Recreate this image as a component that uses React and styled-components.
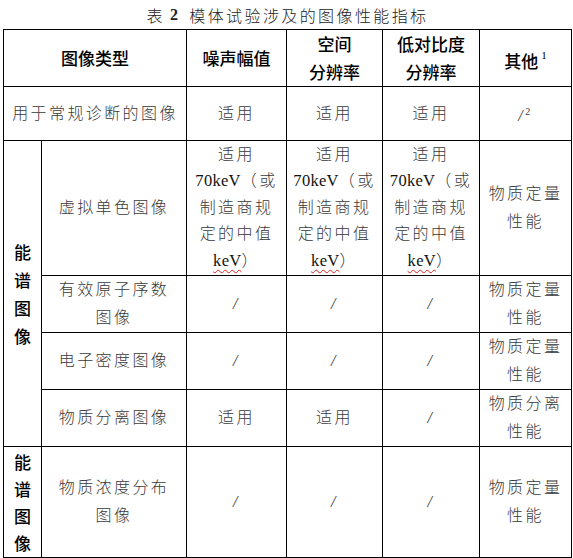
import React from "react";
import styled, { createGlobalStyle } from "styled-components";

const GlobalStyle = createGlobalStyle`
  html, body {
    margin: 0;
    padding: 0;
    background: #ffffff;
  }
`;

const serif = `"Liberation Serif", "Noto Sans CJK SC", serif`;
const sans = `"Noto Sans CJK SC", "Liberation Sans", sans-serif`;

const Page = styled.div`
  width: 573px;
  height: 558px;
  overflow: hidden;
  background: #fff;
`;

const Caption = styled.div`
  height: 29px;
  display: flex;
  align-items: center;
  justify-content: center;
  padding-left: 2px;
  font-family: ${serif};
  font-size: 16px;
  font-weight: 300;
  letter-spacing: 2.4px;
  color: #222;

  b {
    font-weight: 700;
    margin: 0 9px 0 5px;
  }
`;

const Table = styled.table`
  margin-left: 3px;
  width: 568px;
  table-layout: fixed;
  border-collapse: collapse;
`;

const Row = styled.tr`
  height: ${(p) => p.$h}px;
`;

const Head = styled.th`
  border: 1px solid #000;
  padding: 0;
  text-align: center;
  vertical-align: middle;
  font-family: ${sans};
  font-weight: 500;
  font-size: 17px;
  line-height: 28px;
  color: #000;

  sup {
    font-family: ${serif};
    font-weight: 400;
    font-size: 11px;
    margin-left: 3px;
    vertical-align: 9px;
  }
`;

const Group = styled.th`
  border: 1px solid #000;
  padding: 0;
  text-align: center;
  vertical-align: middle;
  font-family: ${sans};
  font-weight: 500;
  font-size: 17px;
  line-height: ${(p) => p.$lh || 28}px;
  color: #000;
`;

const Cell = styled.td`
  border: 1px solid #000;
  padding: 0;
  text-align: center;
  vertical-align: middle;
  font-family: ${serif};
  font-weight: 300;
  font-size: 16px;
  letter-spacing: 2.4px;
  line-height: ${(p) => p.$lh || 28}px;
  color: #3a3a3a;

  sup {
    font-size: 10px;
    vertical-align: 6px;
  }
`;

const Latin = styled.span`
  font-family: ${serif};
  font-size: 16.5px;
  letter-spacing: 0.3px;
  color: #111;
  font-weight: 400;
`;

const Wavy = styled(Latin)`
  text-decoration: underline wavy #d22;
  text-decoration-thickness: 1px;
  text-underline-offset: 3px;
`;

const Slash = styled.span`
  font-family: ${serif};
  font-style: italic;
  font-size: 16px;
  color: #333;
`;

const Median = () => (
  <Cell $lh={26.6}>
    适用
    <br />
    <Latin>70keV</Latin>（或
    <br />
    制造商规
    <br />
    定的中值
    <br />
    <Wavy>keV</Wavy>）
  </Cell>
);

const Na = () => (
  <Cell>
    <Slash>/</Slash>
  </Cell>
);

export default function App() {
  return (
    <Page>
      <GlobalStyle />
      <Caption>
        表<b>2</b>模体试验涉及的图像性能指标
      </Caption>
      <Table>
        <colgroup>
          <col style={{ width: 38 }} />
          <col style={{ width: 145 }} />
          <col style={{ width: 100 }} />
          <col style={{ width: 96 }} />
          <col style={{ width: 97 }} />
          <col style={{ width: 92 }} />
        </colgroup>
        <tbody>
          <Row $h={55}>
            <Head colSpan={2}>图像类型</Head>
            <Head>噪声幅值</Head>
            <Head>
              空间
              <br />
              分辨率
            </Head>
            <Head>
              低对比度
              <br />
              分辨率
            </Head>
            <Head>
              其他<sup>1</sup>
            </Head>
          </Row>
          <Row $h={54}>
            <Cell colSpan={2}>用于常规诊断的图像</Cell>
            <Cell>适用</Cell>
            <Cell>适用</Cell>
            <Cell>适用</Cell>
            <Cell>
              <Slash>/</Slash>
              <sup>2</sup>
            </Cell>
          </Row>
          <Row $h={135}>
            <Group rowSpan={4}>
              能<br />谱<br />图<br />像
            </Group>
            <Cell>虚拟单色图像</Cell>
            <Median />
            <Median />
            <Median />
            <Cell>
              物质定量
              <br />
              性能
            </Cell>
          </Row>
          <Row $h={55}>
            <Cell>
              有效原子序数
              <br />
              图像
            </Cell>
            <Na />
            <Na />
            <Na />
            <Cell>
              物质定量
              <br />
              性能
            </Cell>
          </Row>
          <Row $h={56}>
            <Cell>电子密度图像</Cell>
            <Na />
            <Na />
            <Na />
            <Cell>
              物质定量
              <br />
              性能
            </Cell>
          </Row>
          <Row $h={55}>
            <Cell>物质分离图像</Cell>
            <Cell>适用</Cell>
            <Cell>适用</Cell>
            <Na />
            <Cell>
              物质分离
              <br />
              性能
            </Cell>
          </Row>
          <Row $h={111}>
            <Group $lh={27}>
              能<br />谱<br />图<br />像
            </Group>
            <Cell>
              物质浓度分布
              <br />
              图像
            </Cell>
            <Na />
            <Na />
            <Na />
            <Cell>
              物质定量
              <br />
              性能
            </Cell>
          </Row>
        </tbody>
      </Table>
    </Page>
  );
}
